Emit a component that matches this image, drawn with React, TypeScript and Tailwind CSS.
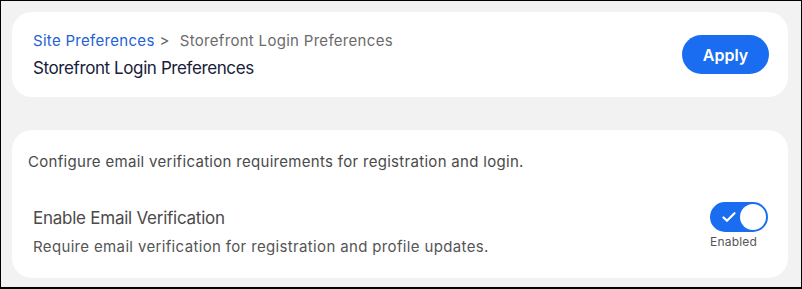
import React from 'react'

const font = { fontFamily: 'Inter, "Liberation Sans", sans-serif' }

const Toggle: React.FC = () => (
  <div className="flex flex-col items-start">
    <div className="w-[58px] h-[30px] rounded-full bg-[#1a6df0] flex items-center justify-between pl-[12px] pr-[2px]">
      <svg width="14" height="12" viewBox="0 0 14 12" fill="none">
        <path d="M1.5 6.5L5 9.8L12.5 2.2" stroke="white" strokeWidth="2.2" strokeLinecap="round" strokeLinejoin="round" />
      </svg>
      <div className="w-[26px] h-[26px] rounded-full bg-white" />
    </div>
    <span className="mt-[2px] text-[12px] leading-[15px] tracking-[0.2px] text-[#555]">Enabled</span>
  </div>
)

const App: React.FC = () => {
  return (
    <div
      style={font}
      className="w-[802px] h-[289px] bg-[#f2f2f2] border border-black border-b-2 pl-[11px] pt-[11px] flex flex-col gap-[33px]"
    >
      <section className="w-[776px] h-[85px] rounded-[20px] bg-white flex items-center justify-between pl-[21px] pr-[19px]">
        <div className="flex flex-col">
          <div className="flex items-center text-[15px] leading-[20px] tracking-[0.3px]">
            <span className="text-[#2461d6]">Site Preferences</span>
            <span className="text-[#666] ml-[5px]">&gt;</span>
            <span className="text-[#6b6b6b] ml-[10px]">Storefront Login Preferences</span>
          </div>
          <h1 className="mt-[6px] text-[17px] leading-[22px] tracking-[-0.4px] text-[#17213a]">
            Storefront Login Preferences
          </h1>
        </div>
        <button className="w-[87px] h-[39px] rounded-full bg-[#1a6df0] text-white text-[16px] font-semibold">
          Apply
        </button>
      </section>

      <section className="w-[776px] h-[148px] rounded-[20px] bg-white pl-[16px] pr-[20px] pt-[22px]">
        <p className="text-[15px] leading-[20px] tracking-[0.3px] text-[#4a4a4a]">
          Configure email verification requirements for registration and login.
        </p>
        <div className="mt-[34px] pl-[5px] flex items-start justify-between">
          <div className="flex flex-col">
            <span className="text-[17px] leading-[24px] tracking-[-0.25px] text-[#4a4a4a]">Enable Email Verification</span>
            <span className="mt-[7px] text-[15px] leading-[20px] tracking-[0.35px] text-[#555]">
              Require email verification for registration and profile updates.
            </span>
          </div>
          <div className="-mt-[4px]">
            <Toggle />
          </div>
        </div>
      </section>
    </div>
  )
}

export default App
